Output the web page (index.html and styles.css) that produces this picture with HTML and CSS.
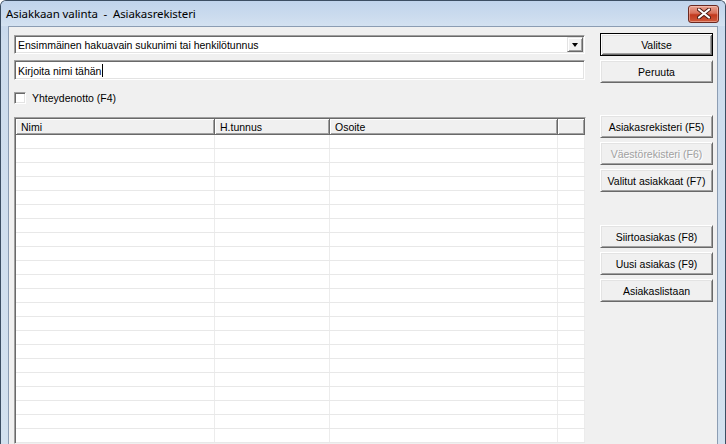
FILE: index.html
```html
<!DOCTYPE html>
<html lang="fi">
<head>
<meta charset="utf-8">
<title>Asiakkaan valinta - Asiakasrekisteri</title>
<link rel="stylesheet" href="styles.css">
</head>
<body>
<div class="window">
  <div class="titlebar">
    <span class="title">Asiakkaan valinta&nbsp; - &nbsp;Asiakasrekisteri</span>
    <button class="close" aria-label="Sulje">
      <svg width="14" height="11" viewBox="0 0 14 11">
        <path d="M2 1.5 L12 9.5 M12 1.5 L2 9.5" stroke="#4a1a12" stroke-width="4" stroke-linecap="round"/>
        <path d="M2 1.5 L12 9.5 M12 1.5 L2 9.5" stroke="#ffffff" stroke-width="2.2" stroke-linecap="round"/>
      </svg>
    </button>
  </div>
  <div class="client">
    <div class="leftcol">
      <div class="combo">
        <span class="combo-text">Ensimmäinen hakuavain sukunimi tai henkilötunnus</span>
        <span class="combo-btn"><span class="arrow"></span></span>
      </div>
      <div class="input">Kirjoita nimi tähän<span class="caret"></span></div>
      <label class="check">
        <span class="box"></span>
        <span>Yhteydenotto (F4)</span>
      </label>
      <div class="list">
        <div class="header">
          <div class="hcell c1">Nimi</div>
          <div class="hcell c2">H.tunnus</div>
          <div class="hcell c3">Osoite</div>
          <div class="hcell c4"></div>
        </div>
        <div class="rows">
          <div class="row"><div class="cell c1"></div><div class="cell c2"></div><div class="cell c3"></div><div class="cell c4"></div></div>
          <div class="row"><div class="cell c1"></div><div class="cell c2"></div><div class="cell c3"></div><div class="cell c4"></div></div>
          <div class="row"><div class="cell c1"></div><div class="cell c2"></div><div class="cell c3"></div><div class="cell c4"></div></div>
          <div class="row"><div class="cell c1"></div><div class="cell c2"></div><div class="cell c3"></div><div class="cell c4"></div></div>
          <div class="row"><div class="cell c1"></div><div class="cell c2"></div><div class="cell c3"></div><div class="cell c4"></div></div>
          <div class="row"><div class="cell c1"></div><div class="cell c2"></div><div class="cell c3"></div><div class="cell c4"></div></div>
          <div class="row"><div class="cell c1"></div><div class="cell c2"></div><div class="cell c3"></div><div class="cell c4"></div></div>
          <div class="row"><div class="cell c1"></div><div class="cell c2"></div><div class="cell c3"></div><div class="cell c4"></div></div>
          <div class="row"><div class="cell c1"></div><div class="cell c2"></div><div class="cell c3"></div><div class="cell c4"></div></div>
          <div class="row"><div class="cell c1"></div><div class="cell c2"></div><div class="cell c3"></div><div class="cell c4"></div></div>
          <div class="row"><div class="cell c1"></div><div class="cell c2"></div><div class="cell c3"></div><div class="cell c4"></div></div>
          <div class="row"><div class="cell c1"></div><div class="cell c2"></div><div class="cell c3"></div><div class="cell c4"></div></div>
          <div class="row"><div class="cell c1"></div><div class="cell c2"></div><div class="cell c3"></div><div class="cell c4"></div></div>
          <div class="row"><div class="cell c1"></div><div class="cell c2"></div><div class="cell c3"></div><div class="cell c4"></div></div>
          <div class="row"><div class="cell c1"></div><div class="cell c2"></div><div class="cell c3"></div><div class="cell c4"></div></div>
          <div class="row"><div class="cell c1"></div><div class="cell c2"></div><div class="cell c3"></div><div class="cell c4"></div></div>
          <div class="row"><div class="cell c1"></div><div class="cell c2"></div><div class="cell c3"></div><div class="cell c4"></div></div>
          <div class="row"><div class="cell c1"></div><div class="cell c2"></div><div class="cell c3"></div><div class="cell c4"></div></div>
          <div class="row"><div class="cell c1"></div><div class="cell c2"></div><div class="cell c3"></div><div class="cell c4"></div></div>
          <div class="row"><div class="cell c1"></div><div class="cell c2"></div><div class="cell c3"></div><div class="cell c4"></div></div>
          <div class="row"><div class="cell c1"></div><div class="cell c2"></div><div class="cell c3"></div><div class="cell c4"></div></div>
          <div class="row"><div class="cell c1"></div><div class="cell c2"></div><div class="cell c3"></div><div class="cell c4"></div></div>
        </div>
      </div>
    </div>
    <div class="rightcol">
      <div class="btngroup main">
        <button class="btn default">Valitse</button>
        <button class="btn">Peruuta</button>
      </div>
      <div class="btngroup sources">
        <button class="btn">Asiakasrekisteri (F5)</button>
        <button class="btn" disabled>Väestörekisteri (F6)</button>
        <button class="btn">Valitut asiakkaat (F7)</button>
      </div>
      <div class="btngroup actions">
        <button class="btn">Siirtoasiakas (F8)</button>
        <button class="btn">Uusi asiakas (F9)</button>
        <button class="btn">Asiakaslistaan</button>
      </div>
    </div>
  </div>
</div>
</body>
</html>
```

FILE: styles.css
```css
* { box-sizing: border-box; }

html, body {
  margin: 0;
  padding: 0;
  width: 726px;
  height: 444px;
  overflow: hidden;
  background: #ffffff;
}

body {
  font-family: "Liberation Sans", Arial, sans-serif;
  font-size: 10.5px;
  color: #000;
}

.window {
  width: 726px;
  height: 444px;
  display: flex;
  flex-direction: column;
  background: linear-gradient(to bottom, #c3d6ee 0px, #cddced 40px, #d3e1ef 100%);
  border: 1px solid #3c4e63;
  border-bottom: none;
  border-radius: 6px 6px 0 0;
  padding: 0 7px 0 7px;
}

.titlebar {
  height: 28px;
  display: flex;
  align-items: center;
  justify-content: space-between;
  background: linear-gradient(to bottom, #c0d4ec 0%, #cbdbee 60%, #d4e2f1 100%);
  margin: 0 -7px;
  padding: 0 6px 1px 5px;
  border-radius: 5px 5px 0 0;
}

.title {
  font-family: "Noto Sans", "Open Sans", sans-serif;
  font-size: 11.5px;
  color: #000;
  letter-spacing: -0.1px;
}

.close {
  width: 31px;
  height: 18px;
  margin-top: 1px;
  padding: 0;
  display: flex;
  align-items: center;
  justify-content: center;
  border: 1px solid #6b2a22;
  border-radius: 3px;
  background: linear-gradient(to bottom, #e8a493 0%, #d9705a 45%, #c2391e 55%, #cf5a3c 100%);
  box-shadow: inset 0 0 0 1px rgba(255, 220, 210, 0.45);
}

.client {
  flex: 1;
  display: flex;
  background: #f0f0f0;
  border: 1px solid #8c9db3;
  border-bottom: none;
  padding: 6px 4px 0 5px;
  gap: 14px;
}

.leftcol {
  width: 573px;
  display: flex;
  flex-direction: column;
}

.combo {
  height: 19px;
  margin-top: 2px;
  margin-right: 1px;
  display: flex;
  align-items: center;
  background: #fff;
  border-style: solid;
  border-width: 1px;
  border-color: #a0a0a0 #ffffff #ffffff #a0a0a0;
  box-shadow: inset 1px 1px 0 #696969, inset -1px -1px 0 #e3e3e3;
}

.combo-text {
  flex: 1;
  padding-left: 3px;
  padding-top: 1px;
}

.combo-btn {
  width: 16px;
  height: 15px;
  margin-right: 1px;
  display: flex;
  align-items: center;
  justify-content: center;
  background: #f0f0f0;
  border-style: solid;
  border-width: 1px;
  border-color: #e3e3e3 #696969 #696969 #e3e3e3;
  box-shadow: inset 1px 1px 0 #ffffff, inset -1px -1px 0 #a0a0a0;
}

.arrow {
  width: 0;
  height: 0;
  border-left: 3.5px solid transparent;
  border-right: 3.5px solid transparent;
  border-top: 4px solid #000;
  margin-top: 1px;
}

.input {
  height: 20px;
  margin-top: 6px;
  margin-right: 1px;
  display: flex;
  align-items: center;
  padding-left: 3px;
  padding-top: 1px;
  background: #fff;
  border-style: solid;
  border-width: 1px;
  border-color: #a0a0a0 #ffffff #ffffff #a0a0a0;
  box-shadow: inset 1px 1px 0 #696969, inset -1px -1px 0 #e3e3e3;
}

.caret {
  display: inline-block;
  width: 1px;
  height: 13px;
  background: #000;
  margin-left: 1px;
}

.check {
  display: flex;
  align-items: center;
  gap: 6px;
  margin-top: 12px;
  height: 12px;
}

.box {
  width: 12px;
  height: 12px;
  background: #fff;
  border-style: solid;
  border-width: 1px;
  border-color: #a0a0a0 #ffffff #ffffff #a0a0a0;
  box-shadow: inset 1px 1px 0 #696969, inset -1px -1px 0 #e3e3e3;
}

.list {
  flex: 1;
  margin-top: 13px;
  background: #fff;
  border-style: solid;
  border-width: 1px;
  border-color: #a0a0a0 #f0f0f0 #f0f0f0 #a0a0a0;
  box-shadow: inset 1px 1px 0 #696969;
  padding: 1px 0 0 1px;
  overflow: hidden;
}

.header {
  display: flex;
  height: 16px;
  background: #f0f0f0;
}

.hcell {
  height: 16px;
  padding-left: 5px;
  padding-top: 2px;
  line-height: 12px;
  border-style: solid;
  border-width: 0 1px 1px 0;
  border-color: #f0f0f0 #696969 #696969 #f0f0f0;
  box-shadow: inset 1px 1px 0 #ffffff, inset -1px -1px 0 #a0a0a0;
}

.c1 { width: 199px; }
.c2 { width: 115px; }
.c3 { width: 228px; }
.c4 { width: 27px; }

.row {
  display: flex;
  height: 14px;
  border-bottom: 1px solid #e8e8e8;
}

.cell {
  height: 13px;
  border-right: 1px solid #ececec;
}

.rightcol {
  width: 113px;
  display: flex;
  flex-direction: column;
}

.btngroup {
  display: flex;
  flex-direction: column;
  gap: 4px;
}

.sources {
  margin-top: 32px;
}

.actions {
  margin-top: 33px;
}

.btn {
  height: 23px;
  width: 113px;
  padding: 0;
  font-family: "Liberation Sans", Arial, sans-serif;
  font-size: 10.5px;
  color: #000;
  background: #f0f0f0;
  border-style: solid;
  border-width: 1px;
  border-color: #ffffff #696969 #696969 #ffffff;
  box-shadow: inset 1px 1px 0 #e3e3e3, inset -1px -1px 0 #a0a0a0;
}

.btn.default {
  border: 1px solid #000;
  box-shadow: inset 1px 1px 0 #ffffff, inset -1px -1px 0 #696969, inset 2px 2px 0 #e3e3e3, inset -2px -2px 0 #a0a0a0;
}

.btn:disabled {
  color: #a0a0a0;
  text-shadow: 1px 1px 0 #ffffff;
}
```
